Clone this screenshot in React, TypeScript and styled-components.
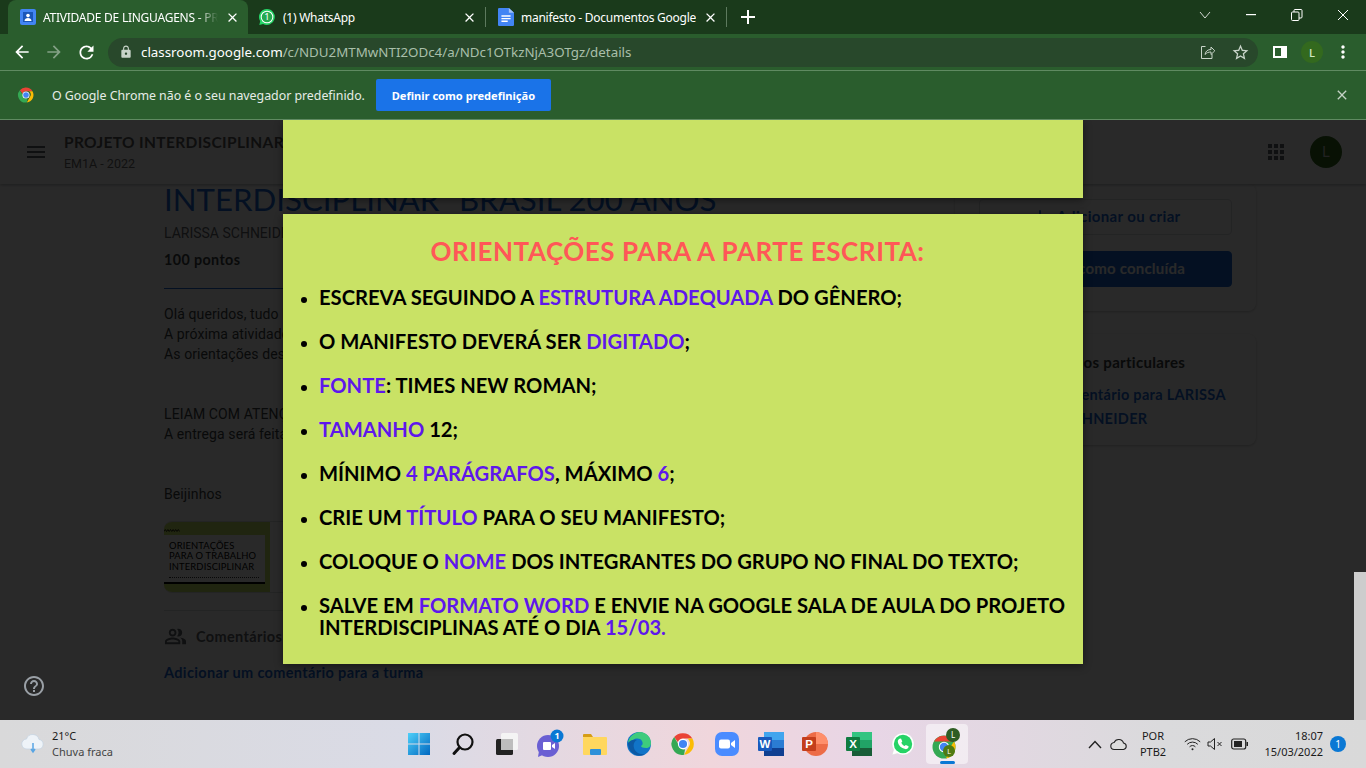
import React from 'react'
import styled, { createGlobalStyle, css } from 'styled-components'
import {
  MdAdd,
  MdApps,
  MdArrowBack,
  MdArrowForward,
  MdClose,
  MdHelpOutline,
  MdLock,
  MdMenu,
  MdMoreVert,
  MdOutlinePeopleAlt,
  MdPersonOutline,
  MdRefresh,
  MdStarBorder,
} from 'react-icons/md'

const Global = createGlobalStyle`
  html, body { margin: 0; padding: 0; height: 100%; overflow: hidden; }
  body { font-family: "Open Sans", "Liberation Sans", sans-serif; }
  #root { height: 100%; }
`

const flexCenter = css`
  display: flex;
  align-items: center;
  justify-content: center;
`

const Screen = styled.div`
  width: 1366px;
  height: 768px;
  display: flex;
  flex-direction: column;
  overflow: hidden;
`

/* ---------- browser chrome ---------- */
const TabStrip = styled.div`
  height: 34px;
  background: #1a3a1b;
  display: flex;
  align-items: flex-end;
  padding-left: 8px;
  color: #fff;
  font-size: 12px;
`
const Tab = styled.div<{ $active?: boolean; $width: number; $pad: number }>`
  width: ${p => p.$width}px;
  height: 34px;
  box-sizing: border-box;
  padding: 0 8px 0 ${p => p.$pad}px;
  display: flex;
  align-items: center;
  gap: 7px;
  border-radius: 8px 8px 0 0;
  background: ${p => (p.$active ? '#2a5d2d' : 'transparent')};
`
const TabTitle = styled.span<{ $fade?: boolean }>`
  flex: 1;
  white-space: nowrap;
  overflow: hidden;
  font-family: "Noto Sans", sans-serif;
  font-size: 12px;
  letter-spacing: -0.25px;
  ${p => p.$fade && css`
    mask-image: linear-gradient(to right, #000 88%, transparent 100%);
  `}
`
const TabSep = styled.div`
  width: 1px;
  height: 20px;
  margin-bottom: 7px;
  background: #5d7a5e;
`
const NewTab = styled.div`
  ${flexCenter};
  width: 20px;
  height: 34px;
  margin-left: 11px;
`
const WindowControls = styled.div`
  margin-left: auto;
  display: flex;
  align-self: flex-start;
  height: 34px;
`
const WinButton = styled.div`
  ${flexCenter};
  width: 46px;
  height: 30px;
`
const Toolbar = styled.div`
  height: 36px;
  background: #2a5d2d;
  border-bottom: 1px solid #5f8a61;
  display: flex;
  align-items: center;
  color: #fff;
`
const NavButton = styled.div<{ $dim?: boolean }>`
  ${flexCenter};
  width: 32px;
  height: 30px;
  color: ${p => (p.$dim ? '#84a186' : '#fff')};
`
const NavGroup = styled.div`
  display: flex;
  box-sizing: border-box;
  padding-left: 6px;
  width: 108px;
`
const Omnibox = styled.div`
  width: 1150px;
  height: 29px;
  border-radius: 15px;
  background: #28482b;
  display: flex;
  align-items: center;
  padding: 0 2px 0 11px;
  box-sizing: border-box;
  color: #c8d4c9;
`
const Url = styled.div`
  margin-left: 8px;
  flex: 1;
  font-family: "Noto Sans", sans-serif;
  font-size: 13.35px;
  color: #a9bfaa;
  span { color: #fff; }
`
const OmniIcon = styled.div`
  ${flexCenter};
  width: 32px;
`
const ToolbarRight = styled.div`
  display: flex;
  align-items: center;
  flex: 1;
  padding-left: 12px;
`
const PanelButton = styled.div`
  ${flexCenter};
  width: 20px;
`
const SmallAvatar = styled.div`
  ${flexCenter};
  width: 22px;
  height: 22px;
  margin: 0 4px 0 11px;
  border-radius: 50%;
  background: #33691e;
  color: #cfe8c0;
  font-size: 11px;
  font-weight: 600;
`
const InfoBar = styled.div`
  height: 49px;
  box-sizing: border-box;
  background: #2a5d2d;
  border-bottom: 1px solid #5f8a61;
  display: flex;
  align-items: center;
  padding-left: 17px;
  color: #e6ece6;
  font-family: "Noto Sans", sans-serif;
  font-size: 12.4px;
`
const InfoText = styled.span`
  margin-left: 17px;
  letter-spacing: -0.03px;
`
const PrimaryButton = styled.div`
  ${flexCenter};
  margin-left: 11px;
  width: 175px;
  height: 32px;
  border-radius: 2px;
  background: #1a73e8;
  color: #fff;
  font-size: 11.1px;
  font-weight: 700;
`
const InfoClose = styled.div`
  ${flexCenter};
  margin-left: auto;
  margin-right: 16px;
  color: #c5d2c6;
`

/* ---------- classroom page ---------- */
const PageArea = styled.div`
  position: relative;
  height: 600px;
  background: #fff;
  overflow: hidden;
  font-family: Roboto, sans-serif;
  color: #1f1f1f;
`
const AppBar = styled.header`
  position: relative;
  z-index: 1;
  height: 64px;
  box-sizing: border-box;
  background: #fff;
  box-shadow: 0 1px 3px rgba(60, 64, 67, .4);
  display: flex;
  align-items: center;
  padding: 0 24px;
`
const BarTitles = styled.div`
  margin-left: 16px;
  display: flex;
  flex-direction: column;
  gap: 4px;
`
const BarTitle = styled.div`
  font-family: Lato, sans-serif;
  font-size: 15.5px;
  line-height: 19px;
  font-weight: 700;
  letter-spacing: .35px;
  color: #5a5a5a;
`
const BarSub = styled.div`
  font-size: 12.5px;
  line-height: 16px;
  color: #6b6b6b;
`
const BarRight = styled.div`
  margin-left: auto;
  display: flex;
  align-items: center;
  gap: 22px;
  color: #5f6368;
`
const BarAvatar = styled.div`
  ${flexCenter};
  width: 32px;
  height: 32px;
  border-radius: 50%;
  background: #33691e;
  color: #cfcfcf;
  font-size: 14px;
`
const Content = styled.div`
  display: grid;
  grid-template-columns: 767px 301px;
  column-gap: 24px;
  padding-left: 164px;
`
const Main = styled.main`
  margin-top: -5px;
  display: flex;
  flex-direction: column;
`
const Title = styled.h1`
  margin: 0;
  height: 40px;
  font-family: Lato, sans-serif;
  font-size: 31.2px;
  line-height: 40px;
  font-weight: 400;
  white-space: nowrap;
  color: #1967d2;
`
const Author = styled.div`
  margin-top: 4px;
  font-size: 14px;
  line-height: 20px;
  color: #5f6368;
`
const Points = styled.div`
  margin-top: 7px;
  font-family: Lato, sans-serif;
  font-size: 14.3px;
  font-weight: 700;
  letter-spacing: .4px;
  line-height: 20px;
  color: #3c4043;
`
const Rule = styled.hr<{ $color?: string }>`
  margin: 0;
  border: 0;
  border-top: 1px solid ${p => p.$color || '#dadce0'};
`
const Body = styled.div`
  margin-top: 15px;
  font-size: 14px;
  line-height: 20px;
  letter-spacing: .1px;
  color: #3c4043;
`
const Gap = styled.div<{ $h: number }>`
  height: ${p => p.$h}px;
`
const Attachment = styled.div`
  margin-top: 17px;
  height: 72px;
  width: 440px;
  border: 1px solid #dadce0;
  border-left: 0;
  border-radius: 8px;
  box-sizing: border-box;
  overflow: hidden;
  display: flex;
`
const Thumb = styled.div`
  width: 106px;
  background: #c9e265;
  padding-top: 7px;
  box-sizing: border-box;
  svg { display: block; }
`
const ThumbCard = styled.div`
  margin-top: 3px;
  width: 101px;
  height: 49px;
  background: #fff;
  box-sizing: border-box;
  padding: 6px 0 0 5px;
  font-family: Lato, sans-serif;
  font-size: 9.4px;
  line-height: 10.4px;
  letter-spacing: .15px;
  color: #000;
  border-bottom: 2px solid #000;
`
const ThumbLine = styled.div`
  margin-top: 5px;
  width: 90px;
  border-top: 1px dotted #333;
`
const CommentsRow = styled.div`
  margin-top: 13px;
  display: flex;
  align-items: center;
  gap: 9px;
  height: 24px;
  font-family: Lato, sans-serif;
  font-size: 14.5px;
  font-weight: 700;
  letter-spacing: .35px;
  color: #5f6368;
`
const AddComment = styled.div`
  margin-top: 15px;
  font-family: Lato, sans-serif;
  font-size: 14.5px;
  font-weight: 700;
  letter-spacing: .35px;
  line-height: 20px;
  color: #1967d2;
`
const Side = styled.aside`
  display: flex;
  flex-direction: column;
  gap: 23px;
`
const Card = styled.section<{ $height: number }>`
  height: ${p => p.$height}px;
  box-sizing: border-box;
  border-radius: 8px;
  background: #fff;
  box-shadow: 0 1px 3px rgba(60, 64, 67, .3);
  padding: 0 24px;
  display: flex;
  flex-direction: column;
`
const OutlineButton = styled.div`
  ${flexCenter};
  box-sizing: border-box;
  height: 36px;
  margin-top: 15px;
  gap: 6px;
  padding-bottom: 3px;
  border: 1px solid #dadce0;
  border-radius: 4px;
  font-family: Lato, sans-serif;
  font-size: 15px;
  font-weight: 700;
  letter-spacing: .35px;
  color: #1967d2;
`
const FilledButton = styled(OutlineButton)`
  margin-top: 16px;
  letter-spacing: .2px;
  border-color: #1967d2;
  background: #1967d2;
  color: #fff;
`
const CardHeading = styled.div`
  margin-top: 16px;
  display: flex;
  align-items: center;
  gap: 8px;
  font-family: Lato, sans-serif;
  font-size: 15px;
  font-weight: 700;
  letter-spacing: .3px;
  color: #3c4043;
`
const CardLink = styled.div`
  margin-top: 9px;
  text-align: center;
  font-family: Lato, sans-serif;
  font-size: 14.5px;
  font-weight: 700;
  letter-spacing: .3px;
  line-height: 24px;
  color: #1967d2;
`
const Help = styled.div`
  ${flexCenter};
  position: absolute;
  left: 22px;
  top: 554px;
  color: #9aa0a6;
  z-index: 3;
`

/* ---------- slide viewer over the page ---------- */
const Scrim = styled.div`
  position: absolute;
  inset: 0;
  z-index: 2;
  background: rgba(0, 0, 0, .84);
`
const Viewer = styled.div`
  position: absolute;
  z-index: 4;
  top: 0;
  left: 283px;
  width: 800px;
  display: flex;
  flex-direction: column;
  gap: 16px;
`
const Slide = styled.div<{ $height: number }>`
  height: ${p => p.$height}px;
  background: #c9e265;
  box-shadow: 0 2px 8px rgba(0, 0, 0, .45);
  box-sizing: border-box;
  font-family: Lato, sans-serif;
`
const SlideHeading = styled.h2`
  margin: 0;
  padding: 22px 11px 0 0;
  text-align: center;
  font-size: 26px;
  line-height: 30px;
  font-weight: 700;
  letter-spacing: .55px;
  color: #ff5757;
`
const SlideList = styled.ul`
  margin: 20px 0 0;
  padding: 0 0 0 36px;
  display: flex;
  flex-direction: column;
  gap: 22px;
  font-size: 20.2px;
  line-height: 22px;
  font-weight: 700;
  color: #000;
  li::marker { font-size: 17px; }
`
const Mark = styled.span`
  color: #5e17eb;
`
const ScrollThumb = styled.div`
  position: absolute;
  z-index: 4;
  right: 0;
  top: 452px;
  bottom: 0;
  width: 12px;
  background: #cdcdcd;
`

/* ---------- taskbar ---------- */
const Taskbar = styled.footer`
  height: 48px;
  display: grid;
  grid-template-columns: 1fr auto 1fr;
  align-items: center;
  background: linear-gradient(90deg, #d9d9da 0%, #dadbe6 30%, #f0d6dc 52%, #e8d6e6 64%, #dadadc 85%, #d9d9d9 100%);
  color: #1a1a1a;
  font-family: "Noto Sans", sans-serif;
  font-size: 11px;
`
const Weather = styled.div`
  display: flex;
  align-items: center;
  gap: 6px;
  padding-left: 20px;
`
const WeatherText = styled.div`
  display: flex;
  flex-direction: column;
  line-height: 16px;
  span + span { color: #444; }
`
const Dock = styled.div`
  display: flex;
`
const DockItem = styled.div<{ $active?: boolean }>`
  ${flexCenter};
  position: relative;
  width: 44px;
  height: 40px;
  ${p => p.$active && css`
    &::before {
      content: '';
      position: absolute;
      left: 1px;
      right: 1px;
      top: 0;
      bottom: 0;
      border-radius: 4px;
      background: rgba(255, 255, 255, .5);
    }
    &::after {
      content: '';
      position: absolute;
      left: 15px;
      width: 15px;
      bottom: 0;
      height: 3px;
      border-radius: 2px;
      background: #0a78d4;
    }
    svg { position: relative; }
  `}
`
const Tray = styled.div`
  display: flex;
  align-items: center;
  justify-content: flex-end;
  padding-right: 20px;
`
const TrayIcon = styled.div<{ $width: number }>`
  ${flexCenter};
  width: ${p => p.$width}px;
`
const Lang = styled.div`
  width: 42px;
  text-align: center;
  line-height: 16px;
  margin-right: 7px;
`
const Clock = styled.div`
  width: 72px;
  margin: 0 7px 0 0;
  text-align: right;
  line-height: 16px;
`
const Badge = styled.div`
  ${flexCenter};
  width: 16px;
  height: 16px;
  border-radius: 50%;
  background: #0a78d4;
  color: #fff;
  font-size: 10px;
`

const ClassroomFavicon = () => (
  <svg width="16" height="16" viewBox="0 0 16 16">
    <rect width="16" height="16" rx="2" fill="#4285f4" />
    <rect x="3" y="3" width="10" height="10" fill="#1a56b8" />
    <circle cx="8" cy="6.6" r="1.8" fill="#fff" />
    <path d="M4.5 12c0-2 1.6-3 3.5-3s3.500 1 3.500 3z" fill="#fff" />
  </svg>
)
const WhatsAppFavicon = () => (
  <svg width="18" height="18" viewBox="0 0 18 18">
    <path d="M9 1a8 8 0 0 0-6.800 12.200L1.300 17l3.800-.9A8 8 0 1 0 9 1z" fill="#25d366" />
    <circle cx="9" cy="9" r="6.300" fill="#fff" />
    <circle cx="9" cy="9" r="5.300" fill="#25a84f" />
    <text x="9" y="12.300" textAnchor="middle" fontSize="9.500" fontFamily="Noto Sans" fill="#fff">1</text>
  </svg>
)
const DocsFavicon = () => (
  <svg width="16" height="18" viewBox="0 0 14 17" preserveAspectRatio="none">
    <path d="M1 0h8.500L14 4.500V16a1 1 0 0 1-1 1H1a1 1 0 0 1-1-1V1a1 1 0 0 1 1-1z" fill="#4285f4" />
    <path d="M3 7.500h8M3 10h8M3 12.500h5.500" stroke="#fff" strokeWidth="1.300" />
    <path d="M9.500 0L14 4.500H9.500z" fill="#a1c2fa" />
  </svg>
)
const ChromeLogo = ({ size = 18 }: { size?: number }) => (
  <svg width={size} height={size} viewBox="0 0 48 48">
    <path d="M24 4a20 20 0 0 1 17.300 10H24a10 10 0 0 0-9.400 6.600L7.700 11A20 20 0 0 1 24 4z" fill="#ea4335" />
    <path d="M41.300 14A20 20 0 0 1 26 43.900l8.600-15A10 10 0 0 0 32 14z" fill="#fbbc04" />
    <path d="M26 43.900A20 20 0 0 1 7.700 11l8.600 15a10 10 0 0 0 11.500 7.800z" fill="#34a853" />
    <circle cx="24" cy="24" r="9.500" fill="#fff" />
    <circle cx="24" cy="24" r="7.500" fill="#4285f4" />
  </svg>
)
const ShareIcon = () => (
  <svg width="16" height="16" viewBox="0 0 16 16" fill="none" stroke="#c8d4c9" strokeWidth="1">
    <path d="M5.500 2.500H1.500v12h10.500V10" />
    <path d="M5 10.500c.5-3.500 3-5 6-5V3l3.800 3.800L11 10.500V8c-2.500 0-4.500.7-6 2.500z" />
  </svg>
)
const SidePanelIcon = () => (
  <svg width="14" height="14" viewBox="0 0 14 14">
    <path d="M0 1h14v12H0zM2 3v8h6V3z" fill="#fff" fillRule="evenodd" />
  </svg>
)
const RestoreIcon = () => (
  <svg width="12" height="12" viewBox="0 0 12 12" fill="none" stroke="#fff">
    <rect x=".5" y="3" width="7.500" height="8.500" rx="1" />
    <path d="M3 3V1.500a1 1 0 0 1 1-1h6a1 1 0 0 1 1 1V8a1 1 0 0 1-1 1H8" />
  </svg>
)
const Squiggle = () => (
  <svg width="16" height="3" viewBox="0 0 16 3" fill="none" stroke="#000" strokeWidth=".8">
    <path d="M0 2.500l1.300-2 1.300 2 1.300-2 1.300 2 1.300-2 1.300 2 1.300-2 1.300 2 1.300-2 1.300 2 1.300-2 1.300 2" />
  </svg>
)
const CloudIcon = () => (
  <svg width="26" height="24" viewBox="0 0 26 24">
    <path d="M7 17a5 5 0 0 1-.5-10A6.500 6.500 0 0 1 19 7.500a4.800 4.800 0 0 1 0 9.500z" fill="#eef3f8" stroke="#c3d3e2" strokeWidth=".7" />
    <path d="M13 11v8M11 17l2 3 2-3" stroke="#58a5e4" strokeWidth="1.500" fill="none" />
  </svg>
)
const WindowsLogo = () => (
  <svg width="24" height="24" viewBox="0 0 24 24">
    <defs>
      <linearGradient id="win" x1="0" y1="0" x2="1" y2="1">
        <stop offset="0" stopColor="#4ed0f9" />
        <stop offset="1" stopColor="#0067c0" />
      </linearGradient>
    </defs>
    <path d="M1 1h10.500v10.500H1zM12.500 1H23v10.500H12.500zM1 12.500h10.500V23H1zM12.500 12.500H23V23H12.500z" fill="url(#win)" />
  </svg>
)
const SearchIcon = () => (
  <svg width="24" height="24" viewBox="0 0 24 24" fill="none" stroke="#111">
    <circle cx="14" cy="10" r="7.500" strokeWidth="2.200" />
    <path d="M8.500 15.500L3 21.500" strokeWidth="3" strokeLinecap="round" />
  </svg>
)
const TaskViewIcon = () => (
  <svg width="24" height="24" viewBox="0 0 24 24">
    <rect x="6" y="1" width="17" height="17" rx="1.500" fill="#f4f4f4" />
    <rect x="1" y="7" width="17" height="16" rx="1.500" fill="#222" />
    <rect x="6" y="7" width="12" height="11" fill="#bdbdbd" />
  </svg>
)
const ChatIcon = () => (
  <svg width="32" height="32" viewBox="0 0 32 32">
    <circle cx="13" cy="18" r="11" fill="#6a5fd3" />
    <path d="M4 23l-1 6 7-3z" fill="#6a5fd3" />
    <rect x="8" y="14" width="8" height="8" rx="1" fill="#fff" />
    <path d="M17 17l3-2v6l-3-2z" fill="#fff" />
    <circle cx="22" cy="8" r="6.500" fill="#0a78d4" />
    <text x="22" y="11" textAnchor="middle" fontSize="9" fontWeight="700" fontFamily="Noto Sans" fill="#fff">1</text>
  </svg>
)
const FolderIcon = () => (
  <svg width="24" height="24" viewBox="0 0 24 24">
    <path d="M0 3a1 1 0 0 1 1-1h7l2 3h-10z" fill="#d69d16" />
    <rect y="5" width="24" height="18" rx="1" fill="#ffd75e" />
    <rect x="7" y="17" width="11" height="6" rx="1" fill="#2e90d9" />
  </svg>
)
const EdgeIcon = () => (
  <svg width="24" height="24" viewBox="0 0 24 24">
    <circle cx="12" cy="12" r="12" fill="#1174c8" />
    <path d="M1 11C2 4 8 0 13 0c6 0 11 5 11 11 0 3-2 5-5 5-3 0-5-1-5-2 2-1 2-3 1-5-2-3-6-3-9-1-2 1-4 2-5 3z" fill="#3ecb7d" />
    <path d="M10 8c-3 1-4 5-3 8 1 4 6 7 11 6-3 2-8 2-11 0-4-2-6-7-6-11 2-3 6-4 9-3z" fill="#0c59a4" />
  </svg>
)
const ZoomIcon = () => (
  <svg width="24" height="24" viewBox="0 0 24 24">
    <rect width="24" height="24" rx="7" fill="#4a8cff" />
    <rect x="4" y="7.500" width="11" height="9" rx="2" fill="#fff" />
    <path d="M16 11l4-3v8l-4-3z" fill="#fff" />
  </svg>
)
const OfficeIcon = ({ letter, tones, round }: { letter: string; tones: string[]; round?: boolean }) => (
  <svg width="26" height="24" viewBox="0 0 26 24">
    {round ? (
      <>
        <circle cx="14" cy="12" r="12" fill={tones[1]} />
        <path d="M14 0a12 12 0 0 1 12 12H14z" fill={tones[2]} />
      </>
    ) : (
      <>
        <rect x="6" y="0" width="20" height="8" fill={tones[2]} />
        <rect x="6" y="8" width="20" height="8" fill={tones[1]} />
        <rect x="6" y="16" width="20" height="8" fill={tones[3]} />
      </>
    )}
    <rect x="0" y="5" width="14" height="14" rx="1" fill={tones[0]} />
    <text x="7" y="16.300" textAnchor="middle" fontSize="11.500" fontWeight="700" fontFamily="Liberation Sans" fill="#fff">{letter}</text>
  </svg>
)
const WhatsAppIcon = () => (
  <svg width="24" height="24" viewBox="0 0 24 24">
    <path d="M12 1a11 11 0 0 0-9.400 16.700L1 23l5.500-1.500A11 11 0 1 0 12 1z" fill="#fff" stroke="#d8d8d8" strokeWidth=".5" />
    <circle cx="12" cy="12" r="9.200" fill="#25d366" />
    <path d="M8.500 6.800l1.500-.2 1.300 2.900-1 1.200c.7 1.500 1.800 2.600 3.300 3.300l1.200-1.100 2.800 1.400-.3 1.500c-.5 1-2 1.500-3 1.300-4.200-.8-7-3.700-7.500-7.500-.1-1 .7-2.200 1.700-2.800z" fill="#fff" />
  </svg>
)
const ActiveChrome = () => (
  <svg width="32" height="34" viewBox="0 0 32 34">
    <g transform="translate(0 5)">
      <circle cx="13" cy="15" r="11.500" fill="#34a853" />
      <path d="M3 9.500A11.500 11.500 0 0 1 23 9.500H13z" fill="#ea4335" />
      <path d="M23 9.500a11.500 11.500 0 0 1-8 17l4-11z" fill="#fbbc04" />
      <circle cx="13" cy="15" r="5.200" fill="#fff" />
      <circle cx="13" cy="15" r="4.200" fill="#4285f4" />
    </g>
    <circle cx="22" cy="8" r="7" fill="#2f5d24" />
    <text x="22" y="11" textAnchor="middle" fontSize="8" fontFamily="Noto Sans" fill="#fff">L</text>
    <circle cx="18" cy="24" r="6" fill="#4f7a12" />
    <text x="18" y="27" textAnchor="middle" fontSize="7" fontFamily="Noto Sans" fill="#fff">L</text>
  </svg>
)
const TrayCaret = () => (
  <svg width="14" height="9" viewBox="0 0 14 9" fill="none" stroke="#222" strokeWidth="1.400">
    <path d="M1 8l6-6.500L13 8" />
  </svg>
)
const TrayCloud = () => (
  <svg width="18" height="14" viewBox="0 0 18 14" fill="#ddd" stroke="#222" strokeWidth="1.100">
    <path d="M4.500 12.500a3.500 3.500 0 0 1-.4-7A5 5 0 0 1 13.500 6a3.300 3.300 0 0 1 0 6.500z" />
  </svg>
)
const WifiIcon = () => (
  <svg width="17" height="14" viewBox="0 0 17 14" fill="none" stroke="#222" strokeWidth="1">
    <path d="M.8 4.800a11 11 0 0 1 15.400 0" />
    <path d="M3.200 7.300a7.500 7.500 0 0 1 10.600 0" />
    <path d="M5.600 9.800a4 4 0 0 1 5.800 0" />
    <circle cx="8.500" cy="12.300" r="1" fill="#222" stroke="none" />
  </svg>
)
const VolumeMuted = () => (
  <svg width="18" height="14" viewBox="0 0 18 14" fill="none" stroke="#222" strokeWidth="1">
    <path d="M1 5h2.500L7.500 1.500v11L3.500 9H1z" />
    <path d="M10.500 5l4 4M14.500 5l-4 4" />
  </svg>
)
const BatteryIcon = () => (
  <svg width="18" height="12" viewBox="0 0 18 12">
    <rect x=".7" y="1" width="14" height="10" rx="2" fill="none" stroke="#222" strokeWidth="1.200" />
    <rect x="3" y="3" width="8" height="6" fill="#222" />
    <rect x="15.500" y="4" width="1.500" height="4" fill="#222" />
  </svg>
)

const orientacoes: React.ReactNode[] = [
  <>ESCREVA SEGUINDO A <Mark>ESTRUTURA ADEQUADA</Mark> DO GÊNERO;</>,
  <>O MANIFESTO DEVERÁ SER <Mark>DIGITADO</Mark>;</>,
  <><Mark>FONTE</Mark>: TIMES NEW ROMAN;</>,
  <><Mark>TAMANHO</Mark> 12;</>,
  <>MÍNIMO <Mark>4 PARÁGRAFOS</Mark>, MÁXIMO <Mark>6</Mark>;</>,
  <>CRIE UM <Mark>TÍTULO</Mark> PARA O SEU MANIFESTO;</>,
  <>COLOQUE O <Mark>NOME</Mark> DOS INTEGRANTES DO GRUPO NO FINAL DO TEXTO;</>,
  <>SALVE EM <Mark>FORMATO WORD</Mark> E ENVIE NA GOOGLE SALA DE AULA DO PROJETO INTERDISCIPLINAS ATÉ O DIA <Mark>15/03.</Mark></>,
]

export default function App() {
  return (
    <Screen>
      <Global />
      <TabStrip>
        <Tab $active $width={240} $pad={12}>
          <ClassroomFavicon />
          <TabTitle $fade>ATIVIDADE DE LINGUAGENS - PROJETO</TabTitle>
          <MdClose size={15} />
        </Tab>
        <Tab $width={237} $pad={10}>
          <WhatsAppFavicon />
          <TabTitle>(1) WhatsApp</TabTitle>
          <MdClose size={15} />
        </Tab>
        <TabSep />
        <Tab $width={240} $pad={12}>
          <DocsFavicon />
          <TabTitle>manifesto - Documentos Google</TabTitle>
          <MdClose size={15} />
        </Tab>
        <TabSep />
        <NewTab>
          <svg width="14" height="14" viewBox="0 0 14 14">
            <path d="M6 0h2v6h6v2H8v6H6V8H0V6h6z" fill="#fff" />
          </svg>
        </NewTab>
        <WindowControls>
          <WinButton>
            <svg width="12" height="8" viewBox="0 0 12 8" fill="none" stroke="#fff" strokeWidth=".8">
              <path d="M1 1l5 6 5-6" />
            </svg>
          </WinButton>
          <WinButton>
            <svg width="10" height="2" viewBox="0 0 10 2"><rect width="10" height="1.200" fill="#fff" /></svg>
          </WinButton>
          <WinButton><RestoreIcon /></WinButton>
          <WinButton>
            <svg width="12" height="12" viewBox="0 0 12 12" stroke="#fff"><path d="M1 1l10 10M11 1L1 11" /></svg>
          </WinButton>
        </WindowControls>
      </TabStrip>

      <Toolbar>
        <NavGroup>
          <NavButton><MdArrowBack size={20} /></NavButton>
          <NavButton $dim><MdArrowForward size={20} /></NavButton>
          <NavButton><MdRefresh size={21} /></NavButton>
        </NavGroup>
        <Omnibox>
          <MdLock size={14} />
          <Url><span>classroom.google.com</span>/c/NDU2MTMwNTI2ODc4/a/NDc1OTkzNjA3OTgz/details</Url>
          <OmniIcon><ShareIcon /></OmniIcon>
          <OmniIcon><MdStarBorder size={19} /></OmniIcon>
        </Omnibox>
        <ToolbarRight>
          <PanelButton><SidePanelIcon /></PanelButton>
          <SmallAvatar>L</SmallAvatar>
          <NavButton><MdMoreVert size={20} /></NavButton>
        </ToolbarRight>
      </Toolbar>

      <InfoBar>
        <ChromeLogo size={18} />
        <InfoText>O Google Chrome não é o seu navegador predefinido.</InfoText>
        <PrimaryButton>Definir como predefinição</PrimaryButton>
        <InfoClose><MdClose size={16} /></InfoClose>
      </InfoBar>

      <PageArea>
        <AppBar>
          <MdMenu size={24} color="#5f6368" />
          <BarTitles>
            <BarTitle>PROJETO INTERDISCIPLINAR</BarTitle>
            <BarSub>EM1A - 2022</BarSub>
          </BarTitles>
          <BarRight>
            <MdApps size={24} />
            <BarAvatar>L</BarAvatar>
          </BarRight>
        </AppBar>
        <Content>
          <Main>
            <Title>INTERDISCIPLINAR "BRASIL 200 ANOS"</Title>
            <Author>LARISSA SCHNEIDER • 8 de mar.</Author>
            <Points>100 pontos</Points>
            <Gap $h={18} />
            <Rule $color="#1967d2" />
            <Body>
              Olá queridos, tudo bem?<br />
              A próxima atividade do projeto será a escrita do manifesto.<br />
              As orientações destes trabalhos estão no arquivo abaixo.<br />
              <br />
              <br />
              LEIAM COM ATENÇÃO!<br />
              A entrega será feita por aqui.<br />
              <br />
              <br />
              Beijinhos
            </Body>
            <Attachment>
              <Thumb>
                <Squiggle />
                <ThumbCard>
                  ORIENTAÇÕES<br />PARA O TRABALHO<br />INTERDISCIPLINAR
                  <ThumbLine />
                </ThumbCard>
              </Thumb>
            </Attachment>
            <Gap $h={17} />
            <Rule />
            <CommentsRow>
              <MdOutlinePeopleAlt size={23} />
              Comentários da turma
            </CommentsRow>
            <AddComment>Adicionar um comentário para a turma</AddComment>
          </Main>
          <Side>
            <Card $height={127}>
              <OutlineButton>
                <MdAdd size={20} />
                Adicionar ou criar
              </OutlineButton>
              <FilledButton>Marcar como concluída</FilledButton>
            </Card>
            <Card $height={111}>
              <CardHeading>
                <MdPersonOutline size={24} />
                Comentários particulares
              </CardHeading>
              <CardLink>Adicionar comentário para LARISSA SCHNEIDER</CardLink>
            </Card>
          </Side>
        </Content>
        <Help><MdHelpOutline size={24} /></Help>
        <Scrim />
        <Viewer>
          <Slide $height={78} />
          <Slide $height={450}>
            <SlideHeading>ORIENTAÇÕES PARA A PARTE ESCRITA:</SlideHeading>
            <SlideList>
              {orientacoes.map((item, i) => (
                <li key={i}>{item}</li>
              ))}
            </SlideList>
          </Slide>
        </Viewer>
        <ScrollThumb />
      </PageArea>

      <Taskbar>
        <Weather>
          <CloudIcon />
          <WeatherText>
            <span>21°C</span>
            <span>Chuva fraca</span>
          </WeatherText>
        </Weather>
        <Dock>
          <DockItem><WindowsLogo /></DockItem>
          <DockItem><SearchIcon /></DockItem>
          <DockItem><TaskViewIcon /></DockItem>
          <DockItem><ChatIcon /></DockItem>
          <DockItem><FolderIcon /></DockItem>
          <DockItem><EdgeIcon /></DockItem>
          <DockItem><ChromeLogo size={26} /></DockItem>
          <DockItem><ZoomIcon /></DockItem>
          <DockItem><OfficeIcon letter="W" tones={['#185abd', '#2b7cd3', '#41a5ee', '#103f91']} /></DockItem>
          <DockItem><OfficeIcon letter="P" round tones={['#c43e1c', '#ed6c47', '#ff8f6b']} /></DockItem>
          <DockItem><OfficeIcon letter="X" tones={['#107c41', '#21a366', '#33c481', '#185c37']} /></DockItem>
          <DockItem><WhatsAppIcon /></DockItem>
          <DockItem $active><ActiveChrome /></DockItem>
        </Dock>
        <Tray>
          <TrayIcon $width={20}><TrayCaret /></TrayIcon>
          <TrayIcon $width={27}><TrayCloud /></TrayIcon>
          <Lang>POR<br />PTB2</Lang>
          <TrayIcon $width={22}><WifiIcon /></TrayIcon>
          <TrayIcon $width={26}><VolumeMuted /></TrayIcon>
          <TrayIcon $width={22}><BatteryIcon /></TrayIcon>
          <Clock>18:07<br />15/03/2022</Clock>
          <Badge>1</Badge>
        </Tray>
      </Taskbar>
    </Screen>
  )
}
